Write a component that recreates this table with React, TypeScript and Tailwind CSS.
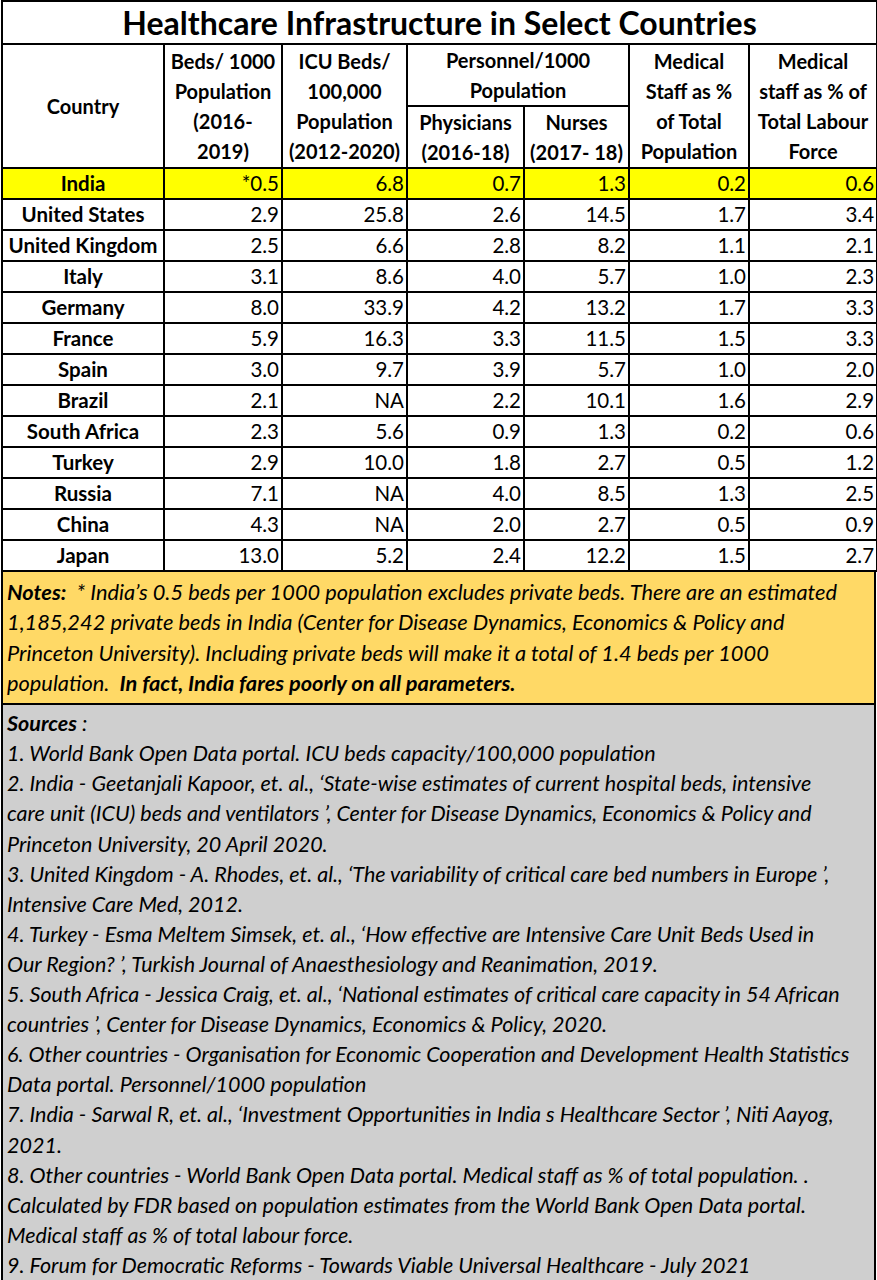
import React from 'react'

const rows = [
  ['India', '*0.5', '6.8', '0.7', '1.3', '0.2', '0.6'],
  ['United States', '2.9', '25.8', '2.6', '14.5', '1.7', '3.4'],
  ['United Kingdom', '2.5', '6.6', '2.8', '8.2', '1.1', '2.1'],
  ['Italy', '3.1', '8.6', '4.0', '5.7', '1.0', '2.3'],
  ['Germany', '8.0', '33.9', '4.2', '13.2', '1.7', '3.3'],
  ['France', '5.9', '16.3', '3.3', '11.5', '1.5', '3.3'],
  ['Spain', '3.0', '9.7', '3.9', '5.7', '1.0', '2.0'],
  ['Brazil', '2.1', 'NA', '2.2', '10.1', '1.6', '2.9'],
  ['South Africa', '2.3', '5.6', '0.9', '1.3', '0.2', '0.6'],
  ['Turkey', '2.9', '10.0', '1.8', '2.7', '0.5', '1.2'],
  ['Russia', '7.1', 'NA', '4.0', '8.5', '1.3', '2.5'],
  ['China', '4.3', 'NA', '2.0', '2.7', '0.5', '0.9'],
  ['Japan', '13.0', '5.2', '2.4', '12.2', '1.5', '2.7'],
]

const sources = [
  '1. World Bank Open Data portal. ICU beds capacity/100,000 population',
  '2. India - Geetanjali Kapoor, et. al., \u2018State-wise estimates of current hospital beds, intensive',
  'care unit (ICU) beds and ventilators \u2019, Center for Disease Dynamics, Economics & Policy and',
  'Princeton University, 20 April 2020.',
  '3. United Kingdom - A. Rhodes, et. al., \u2018The variability of critical care bed numbers in Europe \u2019,',
  'Intensive Care Med, 2012.',
  '4. Turkey - Esma Meltem Simsek, et. al., \u2018How effective are Intensive Care Unit Beds Used in',
  'Our Region? \u2019, Turkish Journal of Anaesthesiology and Reanimation, 2019.',
  '5. South Africa - Jessica Craig, et. al., \u2018National estimates of critical care capacity in 54 African',
  'countries \u2019, Center for Disease Dynamics, Economics & Policy, 2020.',
  '6. Other countries - Organisation for Economic Cooperation and Development Health Statistics',
  'Data portal. Personnel/1000 population',
  '7. India - Sarwal R, et. al., \u2018Investment Opportunities in India s Healthcare Sector \u2019, Niti Aayog,',
  '2021.',
  '8. Other countries - World Bank Open Data portal. Medical staff as % of total population. .',
  'Calculated by FDR based on population estimates from the World Bank Open Data portal.',
  'Medical staff as % of total labour force.',
  '9. Forum for Democratic Reforms - Towards Viable Universal Healthcare - July 2021',
]

const th = 'border-2 border-black font-bold text-center align-middle leading-[30px] text-[20px] whitespace-nowrap'

export default function App() {
  return (
    <div className="w-[877px] bg-white text-black font-['Lato',sans-serif]">
      <div className="ml-px w-[875px]">
        <table className="w-[875px] table-fixed border-collapse">
          <colgroup>
            <col className="w-[162px]" />
            <col className="w-[118px]" />
            <col className="w-[125px]" />
            <col className="w-[117px]" />
            <col className="w-[105px]" />
            <col className="w-[120px]" />
            <col className="w-[128px]" />
          </colgroup>
          <thead>
            <tr className="h-[43px]">
              <th colSpan={7} className="border-2 border-black text-center text-[32px] font-bold leading-none">
                Healthcare Infrastructure in Select Countries
              </th>
            </tr>
            <tr className="h-[60px]">
              <th rowSpan={2} className={th}>Country</th>
              <th rowSpan={2} className={th}>
                Beds/ 1000<br />Population<br />(2016-<br />2019)
              </th>
              <th rowSpan={2} className={th}>
                ICU Beds/<br />100,000<br />Population<br />(2012-2020)
              </th>
              <th colSpan={2} className={th}>
                Personnel/1000<br />Population
              </th>
              <th rowSpan={2} className={th}>
                Medical<br />Staff as %<br />of Total<br />Population
              </th>
              <th rowSpan={2} className={th}>
                Medical<br />staff as % of<br />Total Labour<br />Force
              </th>
            </tr>
            <tr className="h-[62px]">
              <th className={th}>
                Physicians<br />(2016-18)
              </th>
              <th className={th}>
                Nurses<br />(2017- 18)
              </th>
            </tr>
          </thead>
          <tbody>
            {rows.map((r, i) => (
              <tr key={r[0]} className={i === 0 ? 'h-[31px] bg-[#ffff00]' : 'h-[31px]'}>
                <td className="border-2 border-black text-center font-bold text-[20.5px] leading-none whitespace-nowrap">
                  {r[0]}
                </td>
                {r.slice(1).map((v, j) => (
                  <td key={j} className="border-2 border-black text-right pr-[2px] text-[20.5px] leading-none">
                    {v}
                  </td>
                ))}
              </tr>
            ))}
          </tbody>
        </table>

        <div className="border-2 border-t-0 border-black bg-[#ffd966] px-[4px] pt-[5px] pb-[5px] italic text-[21.8px] leading-[30.3px] whitespace-nowrap">
          <div>
            <span className="font-bold">Notes:</span>{'\u00a0 '}* India&rsquo;s 0.5 beds per 1000 population excludes private beds. There are an estimated
          </div>
          <div>1,185,242 private beds in India (Center for Disease Dynamics, Economics &amp; Policy and</div>
          <div>Princeton University). Including private beds will make it a total of 1.4 beds per 1000</div>
          <div>
            population.{'\u00a0 '}<span className="font-bold">In fact, India fares poorly on all parameters.</span>
          </div>
        </div>

        <div className="border-2 border-t-0 border-black bg-[#cfcfcf] px-[4px] pt-[3px] pb-[3px] italic text-[21.5px] leading-[30.1px] whitespace-nowrap">
          <div>
            <span className="font-bold">Sources</span> :
          </div>
          {sources.map((s) => (
            <div key={s}>{s}</div>
          ))}
        </div>
      </div>
    </div>
  )
}
